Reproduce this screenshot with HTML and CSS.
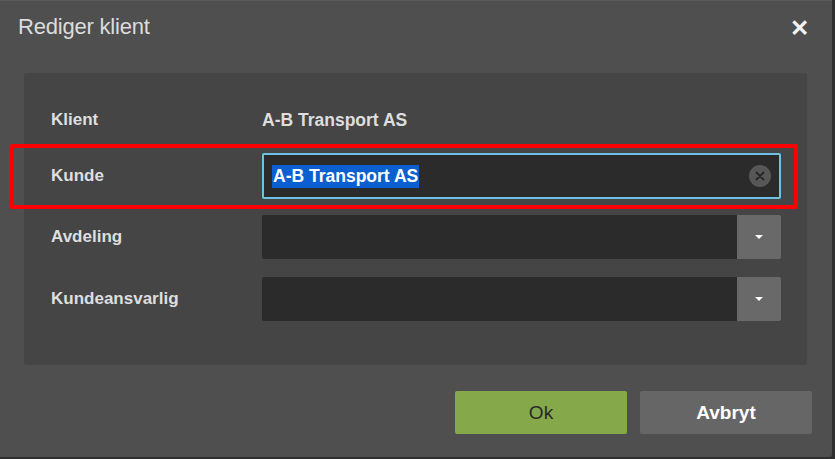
FILE: index.html
```html
<!DOCTYPE html>
<html lang="no">
<head>
    <meta charset="UTF-8">
    <title>Rediger klient</title>
    <link rel="stylesheet" href="styles.css">
</head>
<body>
    <div class="dialog">
        <header class="dialog-header">
            <h1>Rediger klient</h1>
            <span class="close-btn">&#x2715;</span>
        </header>

        <div class="panel">
            <div class="row">
                <label>Klient</label>
                <div class="static-value">A-B Transport AS</div>
            </div>
            <div class="row row-kunde">
                <label>Kunde</label>
                <div class="input focused">
                    <span class="selected">A-B Transport AS</span>
                    <span class="clear-btn">
                        <svg width="22" height="22" viewBox="0 0 22 22">
                            <circle cx="11" cy="11" r="11" fill="#575757"/>
                            <path d="M7.5 7.5 L14.5 14.5 M14.5 7.5 L7.5 14.5" stroke="#262626" stroke-width="1.8" stroke-linecap="round"/>
                        </svg>
                    </span>
                </div>
                <div class="highlight"></div>
            </div>
            <div class="row">
                <label>Avdeling</label>
                <div class="select">
                    <div class="select-field"></div>
                    <div class="select-btn"><span class="caret"></span></div>
                </div>
            </div>
            <div class="row">
                <label>Kundeansvarlig</label>
                <div class="select">
                    <div class="select-field"></div>
                    <div class="select-btn"><span class="caret"></span></div>
                </div>
            </div>
        </div>

        <footer class="dialog-footer">
            <button class="btn btn-ok">Ok</button>
            <button class="btn btn-cancel">Avbryt</button>
        </footer>
    </div>
</body>
</html>
```

FILE: styles.css
```css
body {
    margin: 0;
    padding: 0;
    background-color: #2f2f2f;
    font-family: "Liberation Sans", Arial, sans-serif;
}
.dialog {
    width: 832px;
    height: 457px;
    background-color: #4f4f4f;
    border-top: 1px solid #5a5a5a;
    box-sizing: border-box;
    border-bottom-right-radius: 3px;
}
.dialog-header {
    display: flex;
    justify-content: space-between;
    align-items: center;
    height: 52px;
    padding: 0 23px 0 18px;
}
h1 {
    margin: 0;
    font-size: 22px;
    font-weight: normal;
    color: #dcdcdc;
    letter-spacing: -0.2px;
}
.close-btn {
    color: #f2f2f2;
    font-size: 23px;
    font-weight: bold;
    margin-top: 2px;
}
.panel {
    margin: 20px 25px 0 24px;
    padding: 25px 26px 43px 27px;
    background-color: #454545;
    border-radius: 3px;
    height: 292px;
    box-sizing: border-box;
}
.row {
    display: grid;
    grid-template-columns: 211px 1fr;
    align-items: center;
    position: relative;
}
.row + .row {
    margin-top: 16px;
}
.row:nth-child(2) {
    margin-top: 11px;
}
.row:nth-child(4) {
    margin-top: 18px;
}
label {
    color: #dedede;
    font-size: 17px;
    font-weight: bold;
}
.static-value {
    color: #dedede;
    font-size: 17.5px;
    font-weight: bold;
    height: 44px;
    line-height: 44px;
}
.input {
    height: 46px;
    box-sizing: border-box;
    background-color: #2b2b2b;
    border: 2px solid #6cc3e6;
    border-radius: 2px;
    display: flex;
    align-items: center;
    justify-content: space-between;
    padding: 0 8px 0 8px;
}
.selected {
    background-color: #0b5fd0;
    color: #ffffff;
    font-size: 17.5px;
    font-weight: bold;
    padding: 1px 1px;
}
.clear-btn {
    display: flex;
}
.highlight {
    position: absolute;
    left: -41px;
    right: -17px;
    top: -9px;
    bottom: -10px;
    border: 4px solid #ff0000;
    border-radius: 2px;
    pointer-events: none;
}
.select {
    display: flex;
    height: 44px;
}
.select-field {
    flex: 1;
    background-color: #2b2b2b;
    border-radius: 2px 0 0 2px;
}
.select-btn {
    width: 44px;
    background-color: #696969;
    border-radius: 0 2px 2px 0;
    display: flex;
    align-items: center;
    justify-content: center;
}
.caret {
    width: 0;
    height: 0;
    border-left: 4px solid transparent;
    border-right: 4px solid transparent;
    border-top: 4px solid #ffffff;
}
.dialog-footer {
    display: flex;
    justify-content: flex-end;
    gap: 13px;
    padding: 26px 20px 0 0;
}
.btn {
    width: 172px;
    height: 43px;
    border: none;
    border-radius: 2px;
    font-family: "Liberation Sans", Arial, sans-serif;
    font-size: 19px;
}
.btn-ok {
    background-color: #84a84a;
    color: #2a2a2a;
}
.btn-cancel {
    background-color: #666666;
    color: #ffffff;
    font-weight: bold;
}
```
